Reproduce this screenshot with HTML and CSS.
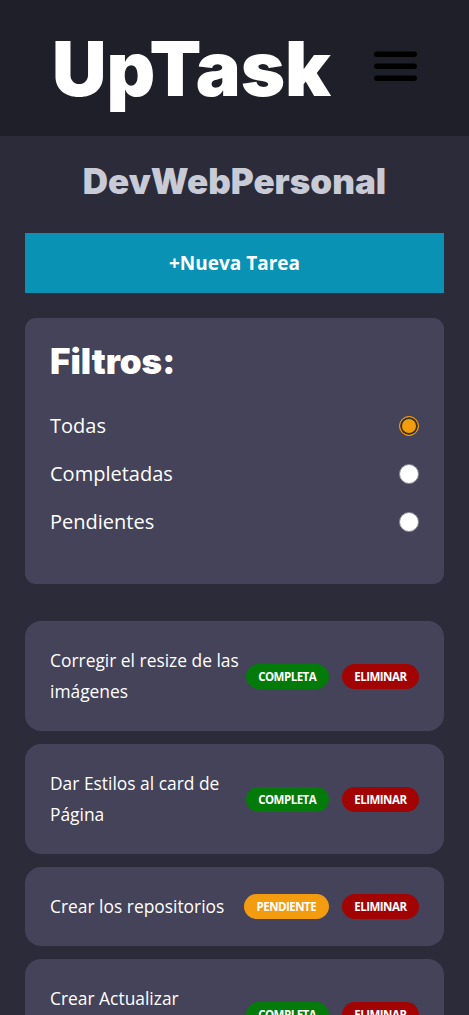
FILE: index.html
```html
<!DOCTYPE html>
<html lang="es">
<head>
<meta charset="utf-8">
<title>UpTask</title>
<link rel="stylesheet" href="styles.css">
</head>
<body>
<header class="header">
  <h1 class="logo">UpTask</h1>
  <button class="menu" aria-label="Menú">
    <svg width="43" height="31" viewBox="0 0 43 31"><rect x="0" y="0.5" width="43" height="5.5" rx="2.75" fill="#000"/><rect x="0" y="12.5" width="43" height="5.5" rx="2.75" fill="#000"/><rect x="0" y="24.5" width="43" height="5.5" rx="2.75" fill="#000"/></svg>
  </button>
</header>
<main class="main">
  <h2 class="project">DevWebPersonal</h2>
  <button class="new-task">+Nueva Tarea</button>
  <section class="filters">
    <h3 class="filters-title">Filtros:</h3>
    <label class="filter"><span>Todas</span><input type="radio" name="f" checked></label>
    <label class="filter"><span>Completadas</span><input type="radio" name="f"></label>
    <label class="filter"><span>Pendientes</span><input type="radio" name="f"></label>
  </section>
  <ul class="tasks">
    <li class="task"><p>Corregir el resize de las imágenes</p><div class="actions"><span class="badge done">Completa</span><span class="badge del">Eliminar</span></div></li>
    <li class="task"><p>Dar Estilos al card de Página</p><div class="actions"><span class="badge done">Completa</span><span class="badge del">Eliminar</span></div></li>
    <li class="task"><p>Crear los repositorios</p><div class="actions"><span class="badge pend">Pendiente</span><span class="badge del">Eliminar</span></div></li>
    <li class="task"><p>Crear Actualizar Proyectos</p><div class="actions"><span class="badge done">Completa</span><span class="badge del">Eliminar</span></div></li>
  </ul>
</main>
</body>
</html>
```
FILE: styles.css
```css
* { box-sizing: border-box; }
html, body { margin: 0; padding: 0; }
body {
  background: #2c2b3a;
  font-family: "Open Sans", sans-serif;
  color: #fff;
}
.header {
  background: #1f1f29;
  height: 136px;
  display: flex;
  align-items: center;
  justify-content: center;
  gap: 43px;
}
.logo {
  margin: 0;
  font-family: Inter, sans-serif;
  font-weight: 900;
  font-size: 75.5px;
  line-height: 1;
  color: #fff;
  padding-top: 2px;
}
.menu {
  background: none;
  border: 0;
  padding: 0;
  display: block;
  margin-top: -4px;
}
.menu svg { display: block; }
.main {
  padding: 0 25px 40px;
}
.project {
  margin: 0;
  padding: 25px 0 32px;
  text-align: center;
  font-family: Inter, sans-serif;
  font-weight: 900;
  font-size: 35px;
  line-height: 40px;
  color: #c8cad6;
}
.new-task {
  display: block;
  width: 100%;
  height: 60px;
  border: 0;
  background: #0992b4;
  color: #fff;
  font-family: "Open Sans", sans-serif;
  font-weight: 700;
  font-size: 19px;
}
.filters {
  margin-top: 25px;
  background: #444359;
  border-radius: 11px;
  padding: 23px 25px 38px;
}
.filters-title {
  margin: 0 0 21px;
  font-family: Inter, sans-serif;
  font-weight: 900;
  font-size: 35px;
  line-height: 40px;
}
.filter {
  display: flex;
  justify-content: space-between;
  align-items: center;
  font-size: 20px;
  line-height: 48px;
}
.filter input {
  appearance: none;
  -webkit-appearance: none;
  margin: 0;
  width: 20px;
  height: 20px;
  border-radius: 50%;
  background: #fff;
  border: 1px solid #8a8a96;
}
.filter input:checked {
  background: #f49c10;
  border: 1.5px solid #f49c10;
  box-shadow: inset 0 0 0 2px #3a3320;
}
.tasks {
  list-style: none;
  margin: 37px 0 0;
  padding: 0;
  display: flex;
  flex-direction: column;
  gap: 13px;
}
.task {
  background: #444359;
  border-radius: 16px;
  padding: 24px 25px;
  display: flex;
  align-items: center;
  gap: 4px;
  min-height: 79px;
}
.task p {
  margin: 0;
  flex: 1;
  font-size: 17.4px;
  line-height: 31px;
}
.actions {
  display: flex;
  gap: 13px;
  flex-shrink: 0;
}
.badge {
  display: inline-block;
  height: 25px;
  line-height: 25px;
  border-radius: 13px;
  padding: 0 12.5px;
  font-size: 11.5px;
  font-weight: 700;
  text-transform: uppercase;
  letter-spacing: -0.5px;
  color: #fff;
}
.done { background: #037a0a; }
.pend { background: #f49c10; }
.del { background: #a20404; }
```
